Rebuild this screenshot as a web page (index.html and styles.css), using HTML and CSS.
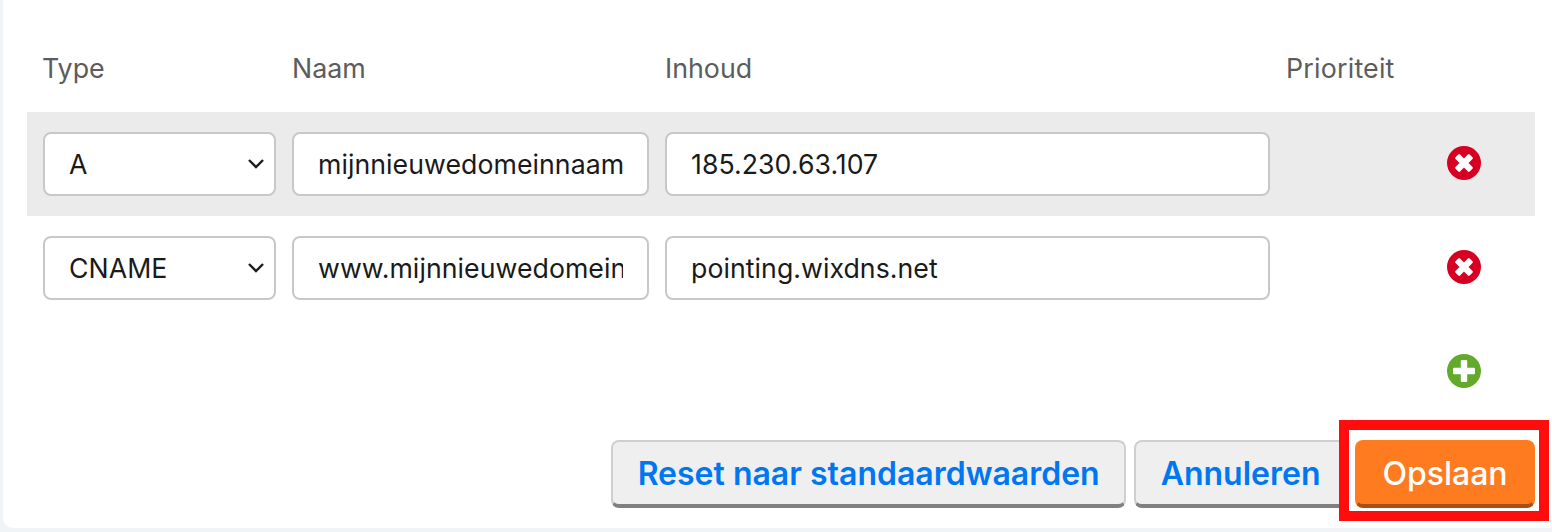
FILE: index.html
```html
<!DOCTYPE html>
<html lang="nl">
<head>
<meta charset="utf-8">
<title>DNS</title>
<link rel="stylesheet" href="styles.css">
</head>
<body>
<main class="card">
  <div class="grid head">
    <div class="first">Type</div>
    <div>Naam</div>
    <div>Inhoud</div>
    <div class="prio">Prioriteit</div>
  </div>
  <div class="grid row shaded">
    <div class="field select"><span class="value">A</span>
      <svg class="chev" viewBox="0 0 18 12"><path d="M2 2 L9 9 L16 2" fill="none" stroke="#1a1a1a" stroke-width="2.400"/></svg></div>
    <div class="field"><span class="value">mijnnieuwedomeinnaam</span></div>
    <div class="field"><span class="value">185.230.63.107</span></div>
    <div class="act">
      <svg class="ico" viewBox="0 0 34 34"><circle cx="17" cy="17" r="17" fill="#d70022"/><g fill="#fff" transform="rotate(45 17 17)"><rect x="7" y="13.800" width="20" height="6.400" rx="1.200"/><rect x="13.800" y="7" width="6.400" height="20" rx="1.200"/></g></svg>
    </div>
  </div>
  <div class="grid row">
    <div class="field select"><span class="value">CNAME</span>
      <svg class="chev" viewBox="0 0 18 12"><path d="M2 2 L9 9 L16 2" fill="none" stroke="#1a1a1a" stroke-width="2.400"/></svg></div>
    <div class="field"><span class="value">www.mijnnieuwedomeinnaam</span></div>
    <div class="field"><span class="value">pointing.wixdns.net</span></div>
    <div class="act">
      <svg class="ico" viewBox="0 0 34 34"><circle cx="17" cy="17" r="17" fill="#d70022"/><g fill="#fff" transform="rotate(45 17 17)"><rect x="7" y="13.800" width="20" height="6.400" rx="1.200"/><rect x="13.800" y="7" width="6.400" height="20" rx="1.200"/></g></svg>
    </div>
  </div>
  <div class="grid row">
    <div class="act wide">
      <svg class="ico" viewBox="0 0 34 34"><circle cx="17" cy="17" r="17" fill="#63aa2a"/><g fill="#fff"><rect x="6" y="13.800" width="22" height="6.400" rx="1.200"/><rect x="13.800" y="6" width="6.400" height="22" rx="1.200"/></g></svg>
    </div>
  </div>
  <div class="buttons">
    <button class="btn">Reset naar standaardwaarden</button>
    <button class="btn">Annuleren</button>
    <div class="save-wrap">
      <button class="btn primary">Opslaan</button>
      <div class="highlight"></div>
    </div>
  </div>
</main>
</body>
</html>
```
FILE: styles.css
```css
* { box-sizing: border-box; }
html, body { margin: 0; height: 532px; overflow: hidden; }
body {
  background: #f0f4f7;
  font-family: "Inter", "Liberation Sans", sans-serif;
  padding: 0 0 4px 3px;
}
.card {
  background: #fff;
  height: 528px;
  border-radius: 0 0 0 10px;
  padding: 0 17px 0 24px;
  display: flex;
  flex-direction: column;
}
.grid {
  display: grid;
  grid-template-columns: 233px 357px 605px 1fr;
  column-gap: 16px;
  padding-left: 16px;
}
.head {
  height: 112px;
  padding-top: 52px;
  font-size: 26.800px;
  line-height: 32px;
  color: #5c5c5c;
}
.first { margin-left: -1px; }
.prio { letter-spacing: 0.200px; }
.row {
  height: 104px;
  align-items: center;
}
.shaded { background: #ebebeb; }
.field {
  height: 64px;
  background: #fff;
  border: 2px solid #c8c8c8;
  border-radius: 8px;
  padding: 0 24px;
  display: flex;
  align-items: center;
  justify-content: space-between;
  font-size: 26.700px;
  letter-spacing: 0.050px;
  color: #1a1a1a;
}
.value {
  display: block;
  white-space: nowrap;
  overflow: hidden;
  flex: 1;
  min-width: 0;
}
.chev { width: 18px; height: 12px; margin-right: -15px; flex: none; }
.act {
  display: flex;
  justify-content: flex-end;
  padding-right: 54px;
}
.wide { grid-column: 1 / -1; }
.ico { width: 34px; height: 34px; display: block; margin-top: -3px; }
.buttons {
  margin-top: 16px;
  display: flex;
  justify-content: flex-end;
  gap: 8px;
}
.btn {
  height: 68px;
  padding: 2px 24.500px 0;
  border: 2px solid #cfcfcf;
  border-bottom: 4px solid #808080;
  border-radius: 8px;
  background: #efefef;
  color: #0077f0;
  font: 600 32px/1 "Inter", "Liberation Sans", sans-serif;
}
.save-wrap { position: relative; }
.primary {
  width: 180px;
  padding: 2px 0 0;
  background: #ff7b20;
  border-color: #ff7b20;
  border-bottom-color: #ad4d13;
  color: #fff;
  font-weight: 500;
  display: block;
}
.highlight {
  position: absolute;
  top: -20px;
  bottom: -13px;
  left: -16px;
  right: -14px;
  border: 10px solid #ff0d0d;
}
```
